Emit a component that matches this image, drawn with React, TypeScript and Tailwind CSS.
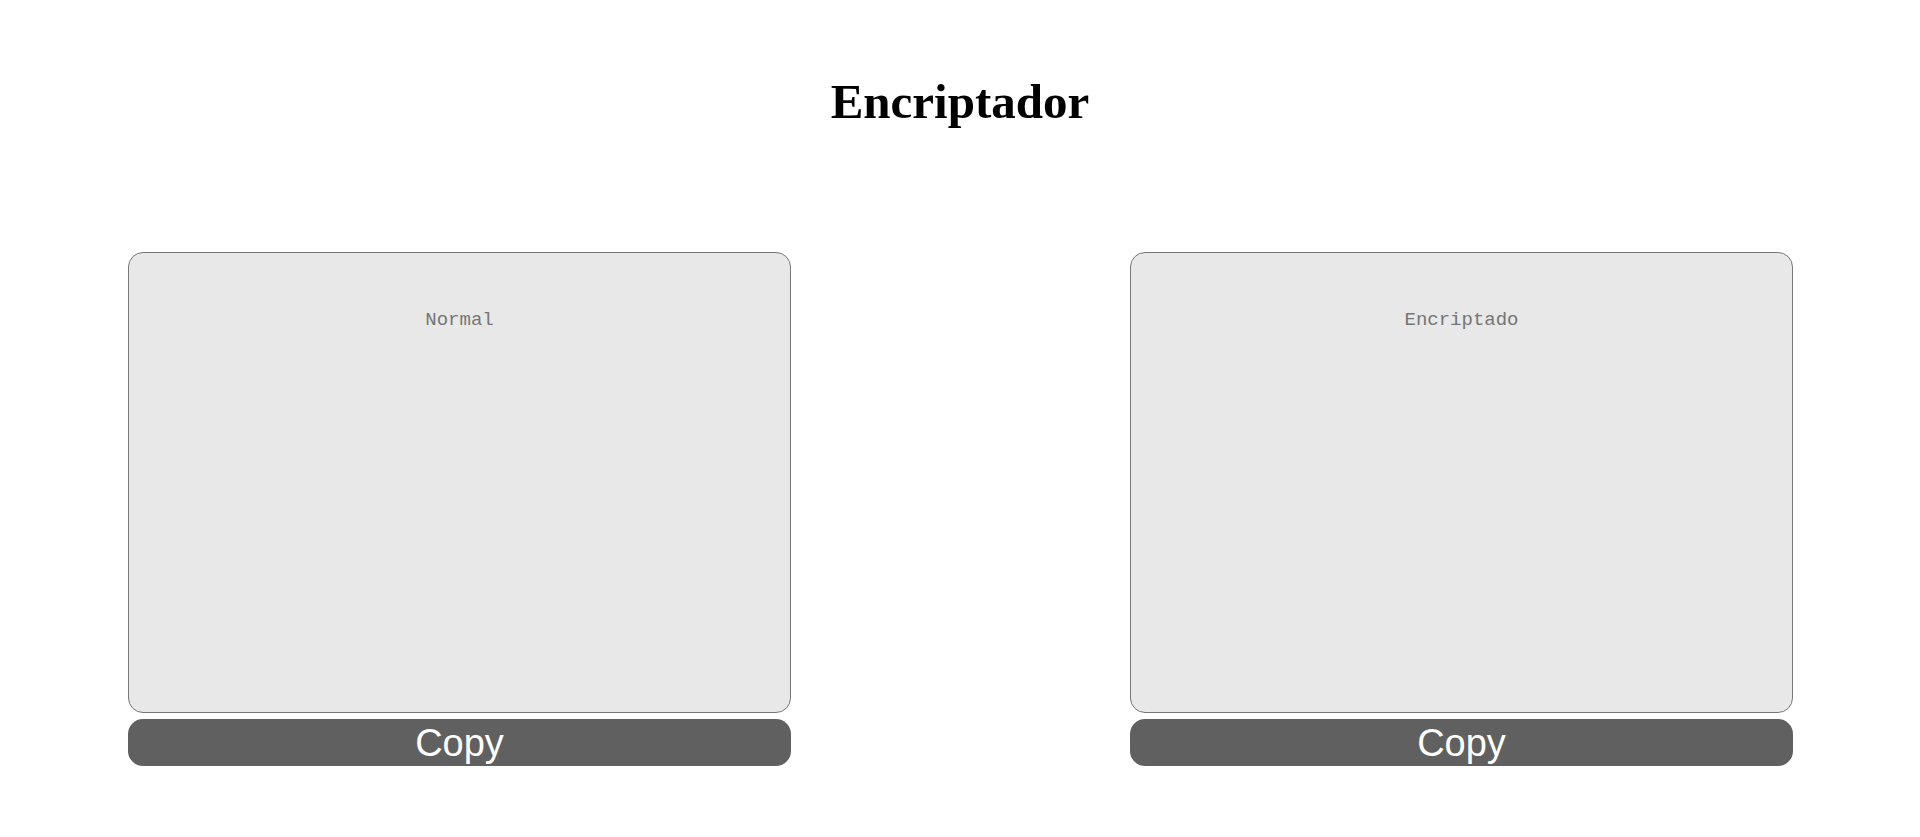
import { useState } from "react";

function Panel({ placeholder }: { placeholder: string }) {
  const [text, setText] = useState("");
  return (
    <div className="flex flex-col w-[663px] gap-[6px]">
      <textarea
        value={text}
        onChange={(e) => setText(e.target.value)}
        placeholder={placeholder}
        className="h-[461px] w-full resize-none rounded-[15px] border border-[#777777] bg-[#e8e8e8] px-4 pt-[56px] text-center text-[19px] leading-[22px] text-[#333] placeholder:text-[#757575] outline-none"
        style={{ fontFamily: '"Liberation Mono", "DejaVu Sans Mono", monospace' }}
      />
      <button
        onClick={() => navigator.clipboard?.writeText(text).catch(() => {})}
        className="h-[47px] w-full rounded-[15px] bg-[#606060] text-[38px] leading-[49px] text-white"
        style={{ fontFamily: '"Liberation Sans", Arial, sans-serif' }}
      >
        Copy
      </button>
    </div>
  );
}

export default function App() {
  return (
    <div className="min-h-screen bg-white">
      <h1
        className="pt-[74px] text-center text-[49px] font-bold leading-[56px] text-black"
        style={{ fontFamily: '"Liberation Serif", "Times New Roman", serif' }}
      >
        Encriptador
      </h1>
      <div className="mt-[122px] flex justify-between pl-[128px] pr-[127px]">
        <Panel placeholder="Normal" />
        <Panel placeholder="Encriptado" />
      </div>
    </div>
  );
}
